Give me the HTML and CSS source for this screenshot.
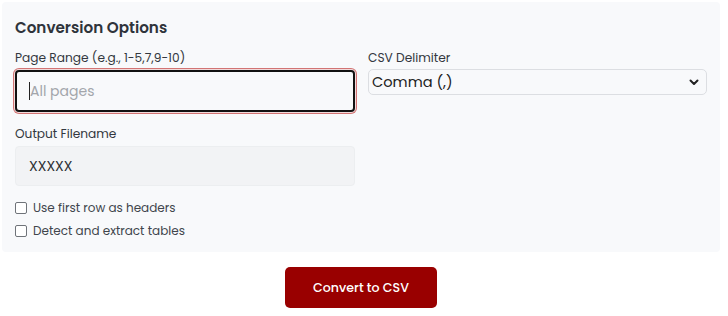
FILE: index.html
```html
<!DOCTYPE html>
<html lang="en">
<head>
<meta charset="utf-8">
<title>Conversion Options</title>
<link rel="stylesheet" href="styles.css">
</head>
<body>
<div class="page">
  <section class="panel">
    <h2 class="title">Conversion Options</h2>
    <div class="grid">
      <div class="field">
        <label class="label" for="range">Page Range (e.g., 1-5,7,9-10)</label>
        <div class="input focus" id="range"><span class="caret"></span><span class="placeholder">All pages</span></div>
      </div>
      <div class="field">
        <label class="label" for="delim">CSV Delimiter</label>
        <div class="select" id="delim">
          <span>Comma (,)</span>
          <svg class="chev" width="10" height="7" viewBox="0 0 10 7"><path d="M1.5 1.5 L5 5 L8.5 1.5" fill="none" stroke="#222" stroke-width="2" stroke-linecap="round" stroke-linejoin="round"/></svg>
        </div>
      </div>
      <div class="field">
        <label class="label" for="fname">Output Filename</label>
        <div class="input filled" id="fname">XXXXX</div>
      </div>
      <div></div>
    </div>
    <div class="checks">
      <label class="check"><span class="box"></span>Use first row as headers</label>
      <label class="check"><span class="box"></span>Detect and extract tables</label>
    </div>
  </section>
  <div class="actions">
    <button class="btn">Convert to CSV</button>
  </div>
</div>
</body>
</html>
```
FILE: styles.css
```css
* { box-sizing: border-box; }
body {
  margin: 0;
  background: #ffffff;
  font-family: "Poppins", "Open Sans", "Noto Sans", sans-serif;
  color: #333840;
}
.page { padding: 2px 8px 0 2px; }
.panel {
  background: #f8f9fb;
  border-radius: 4px;
  padding: 14px 13px 10px 13px;
  height: 250px;
}
.title {
  margin: 0 0 10px 0;
  font-size: 15.2px;
  font-weight: 600;
  line-height: 24px;
  color: #2f343b;
}
.grid {
  display: grid;
  grid-template-columns: 340px 339px;
  column-gap: 13px;
  row-gap: 14px;
}
.field { display: flex; flex-direction: column; }
.label {
  font-size: 12.2px;
  line-height: 16px;
  margin-bottom: 4px;
  color: #333840;
}
.input {
  height: 42px;
  border-radius: 4px;
  display: flex;
  align-items: center;
  padding: 0 12px;
  font-size: 14px;
}
.focus {
  border: 2px solid #111;
  background: #f8f9fb;
  box-shadow: 0 0 0 1px #f1dada, 0 0 0 2px #d27474;
}
.caret {
  width: 1px;
  height: 18px;
  background: #222;
}
.placeholder { color: #a3a6ab; }
.filled {
  height: 40px;
  padding: 0 13px;
  background: #f2f3f5;
  border: 1px solid #eceef0;
  color: #2a2d31;
}
.select {
  height: 26px;
  margin-top: -1px;
  background: #f8f9fb;
  border: 1px solid #dcdee2;
  border-radius: 5px;
  display: flex;
  align-items: center;
  justify-content: space-between;
  padding: 0 7px 0 3px;
  font-size: 14.6px;
  color: #222;
}
.chev { display: block; }
.checks {
  margin-top: 15px;
  display: flex;
  flex-direction: column;
  gap: 9px;
}
.check {
  display: flex;
  align-items: center;
  font-size: 12px;
  line-height: 14px;
  color: #40454c;
}
.box {
  width: 12px;
  height: 12px;
  border: 1px solid #6f7379;
  border-radius: 2px;
  background: #fff;
  margin-right: 6px;
}
.actions {
  display: flex;
  justify-content: center;
  padding-top: 15px;
}
.btn {
  width: 152px;
  height: 41px;
  background: #990000;
  color: #ffffff;
  border: none;
  border-radius: 5px;
  font-family: inherit;
  font-size: 12.6px;
  font-weight: 500;
}
```
